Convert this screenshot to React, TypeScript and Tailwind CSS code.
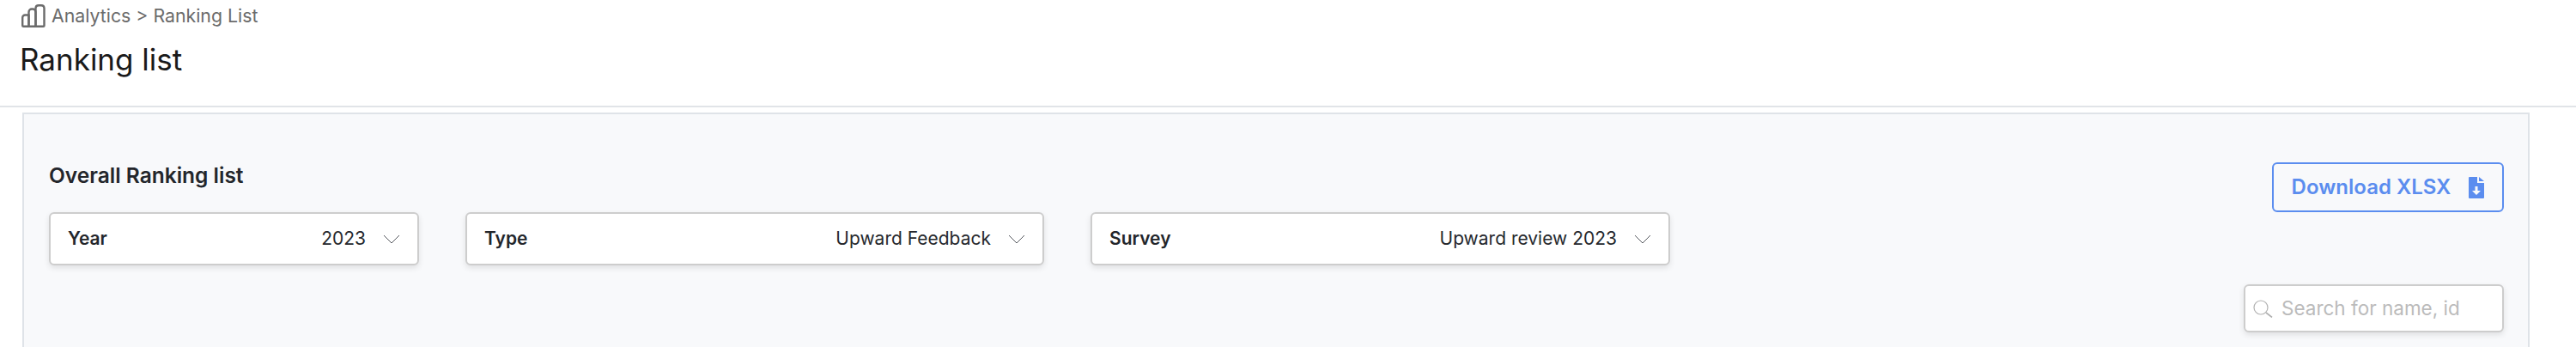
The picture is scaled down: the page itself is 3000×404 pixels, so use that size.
import React from 'react';

const font = { fontFamily: 'Inter, "Liberation Sans", sans-serif' };

function ChartIcon() {
  return (
    <svg width="28" height="27" viewBox="0 0 28 27" fill="none" stroke="#6b6b6b" strokeWidth="2.4" strokeLinejoin="round">
      <path d="M2.5 25.8a1.3 1.3 0 0 1-1.3-1.3v-9a3 3 0 0 1 3-3H8.5v13.3z" />
      <path d="M8.5 25.8V9a3.5 3.5 0 0 1 3.5-3.5h1a3.5 3.5 0 0 1 3.5 3.5v16.8z" />
      <path d="M16.5 25.8V4.5A3.5 3.5 0 0 1 20 1.2h3a3.5 3.5 0 0 1 3.5 3.3v20a1.3 1.3 0 0 1-1.3 1.3z" />
    </svg>
  );
}

function FileDownIcon() {
  return (
    <svg width="18" height="25" viewBox="0 0 18 25" fill="#5b8def">
      <path d="M1 0h9v7h8v17a1 1 0 0 1-1 1H1a1 1 0 0 1-1-1V1a1 1 0 0 1 1-1z" />
      <path d="M12 0l6 5h-6z" />
      <path d="M7.5 11h3v5h3.5L9 21l-5-5h3.5z" fill="#f8f9fb" />
    </svg>
  );
}

function Chevron() {
  return (
    <svg width="20" height="11" viewBox="0 0 20 11" fill="none" stroke="#55585e" strokeWidth="1">
      <path d="M1 1l9 9 9-9" />
    </svg>
  );
}

function SearchIcon() {
  return (
    <svg width="23" height="21" viewBox="0 0 23 21" fill="none" stroke="#b0b0b0" strokeWidth="1.2">
      <circle cx="9" cy="9" r="8" />
      <path d="M15 15l7 5.5" strokeWidth="1.6" />
    </svg>
  );
}

function Select({ label, value, className }: { label: string; value: string; className: string }) {
  return (
    <div className={`flex h-[62px] items-center justify-between rounded-[6px] border-2 border-[#cdcdcd] bg-white pl-[20px] pr-[20px] shadow-[0_3px_7px_rgba(0,0,0,0.1)] ${className}`}>
      <span className="text-[21px] font-semibold text-[#23262b]">{label}</span>
      <div className="flex items-center gap-[20px]">
        <span className="text-[21px] text-[#26292e]">{value}</span>
        <Chevron />
      </div>
    </div>
  );
}

export default function App() {
  return (
    <div className="h-[404px] w-[3000px] overflow-hidden bg-white" style={font}>
      <header className="h-[125px] border-b-2 border-[#e1e4e8] pl-[23px]">
        <div className="flex items-start gap-[7px] pl-[2px] pt-[5px]">
          <ChartIcon />
          <span className="text-[21.3px] leading-[26px] text-[#6b6b6b]">Analytics &gt; Ranking List</span>
        </div>
        <h1 className="mt-[16px] text-[35px] leading-[42px] text-[#1a1a1a]">Ranking list</h1>
      </header>
      <main className="ml-[26px] mr-[54px] mt-[6px] h-[300px] border-2 border-[#dfe3e8] bg-[#f8f9fb] pl-[29px] pr-[28px]">
        <div className="flex items-start justify-between">
          <div>
            <h2 className="pt-[57px] text-[24.5px] font-semibold leading-[28px] text-[#23262b]">Overall Ranking list</h2>
            <div className="mt-[29px] flex gap-[54px]">
              <Select label="Year" value="2023" className="w-[431px]" />
              <Select label="Type" value="Upward Feedback" className="w-[674px]" />
              <Select label="Survey" value="Upward review 2023" className="w-[675px]" />
            </div>
          </div>
          <button className="mt-[56px] flex h-[58px] w-[270px] items-center justify-center gap-[21px] rounded-[6px] border-2 border-[#5b8def] text-[24px] font-semibold text-[#5b8def]">
            Download XLSX
            <FileDownIcon />
          </button>
        </div>
        <div className="mt-[22px] flex justify-end">
          <div className="flex h-[56px] w-[303px] items-center gap-[10px] rounded-[6px] border-2 border-[#cdcdcd] bg-white pl-[9px] shadow-[0_3px_7px_rgba(0,0,0,0.1)]">
            <SearchIcon />
            <span className="text-[22.5px] text-[#bbbbbb]">Search for name, id</span>
          </div>
        </div>
      </main>
    </div>
  );
}
